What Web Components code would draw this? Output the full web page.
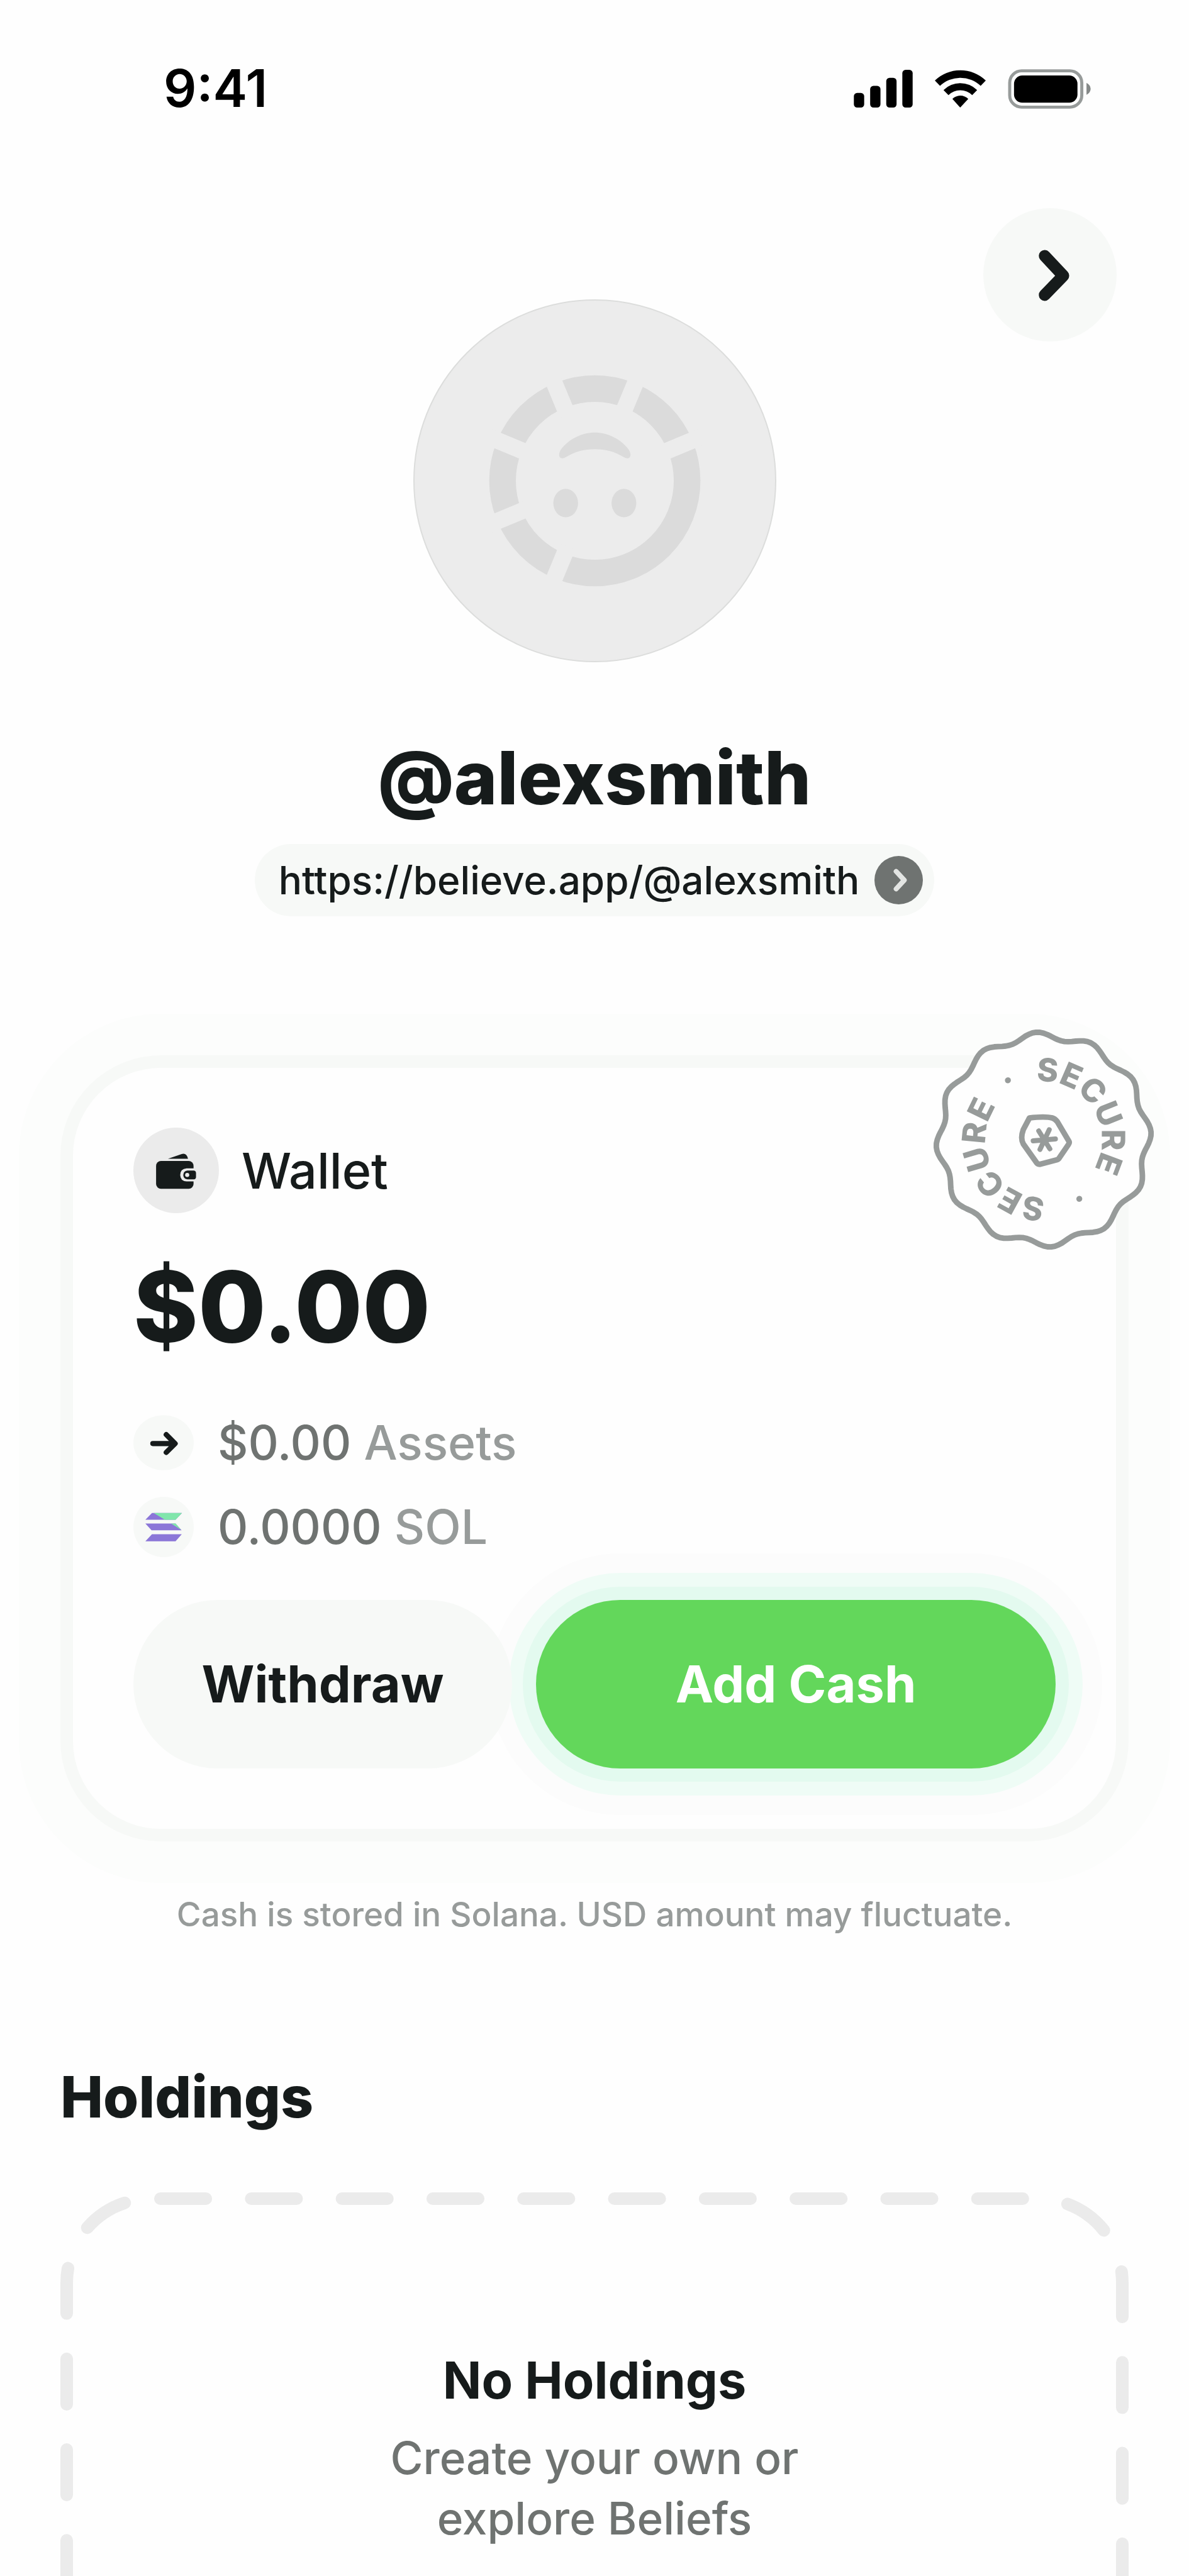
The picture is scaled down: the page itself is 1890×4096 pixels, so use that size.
<!DOCTYPE html>
<html lang="en">
<head>
<meta charset="utf-8">
<meta name="viewport" content="width=device-width, initial-scale=1">
<title>Profile</title>
<style>
    :root {
        --ink: #161b1b;
        --grey: #6f7371;
        --grey-light: #979b9a;
        --surface: #f7f9f7;
        --fill: #ebebeb;
        --page: #fefefe;
        --green: #63d75b;
        --gutter: 96px;
    }
    body {
        margin: 0;
        background: var(--page);
        color: var(--ink);
        font-family: Inter, "Liberation Sans", sans-serif;
    }
</style>
</head>
<body>
<profile-screen>
    <status-bar slot="status">9:41</status-bar>
    <profile-header handle="@alexsmith" url="https://believe.app/@alexsmith"></profile-header>
    <wallet-card amount="$0.00">
        <secure-badge slot="badge"></secure-badge>
        <balance-row icon="arrow" value="$0.00">Assets</balance-row>
        <balance-row icon="solana" value="0.0000">SOL</balance-row>
        <pill-button slot="actions">Withdraw</pill-button>
        <pill-button slot="actions" primary>Add Cash</pill-button>
    </wallet-card>
    <p slot="note">Cash is stored in Solana. USD amount may fluctuate.</p>
    <holdings-section slot="holdings" heading="Holdings">
        <h3 slot="title">No Holdings</h3>
        Create your own or<br>explore Beliefs
    </holdings-section>
</profile-screen>

<script>
const html = String.raw

class BaseElement extends HTMLElement {
    connectedCallback() {
        if (this.shadowRoot)
            return
        this.attachShadow({ mode: "open" })
        this.shadowRoot.innerHTML = this.render()
    }
}

class ProfileScreen extends BaseElement {
    render() {
        return html`
            <style>
                :host {
                    display: flex;
                    flex-direction: column;
                    height: 100vh;
                    overflow: hidden;
                }
                main {
                    display: flex;
                    flex-direction: column;
                    padding: 142px var(--gutter) 0;
                }
                ::slotted(p) {
                    margin: 84px 0 205px;
                    color: var(--grey-light);
                    font-size: 53px;
                    font-weight: 500;
                    line-height: 64px;
                    text-align: center;
                }
            </style>
            <slot name="status"></slot>
            <main>
                <slot></slot>
                <slot name="note"></slot>
                <slot name="holdings"></slot>
            </main>
        `
    }
}

class StatusBar extends BaseElement {
    render() {
        return html`
            <style>
                :host {
                    display: flex;
                    align-items: center;
                    justify-content: space-between;
                    padding: 93px 156px 0 260px;
                    color: #000;
                    font-size: 82px;
                    font-weight: 600;
                    line-height: 96px;
                }
                .icons {
                    display: flex;
                    align-items: center;
                    gap: 35px;
                }
                svg { display: block; }
            </style>
            <time><slot></slot></time>
            <div class="icons">
                <svg width="94" height="60" viewBox="52 276 285 183" aria-hidden="true">
                    <rect x="52" y="388" width="50" height="71" rx="16" />
                    <rect x="131" y="354" width="50" height="105" rx="16" />
                    <rect x="209" y="315" width="50" height="144" rx="16" />
                    <rect x="287" y="276" width="50" height="183" rx="16" />
                </svg>
                <svg width="81" height="60" viewBox="445 276 247 183" aria-hidden="true">
                    <path d="M445 328 A179 179 0 0 1 692 328 L667 354 A143 143 0 0 0 470 354 Z" />
                    <path d="M487 374 A116 116 0 0 1 650 374 L626 399 A82 82 0 0 0 511 399 Z" />
                    <path d="M530 417 A55 55 0 0 1 607 417 L568 459 Z" />
                </svg>
                <svg width="132" height="63" viewBox="800 270 402 193" aria-hidden="true">
                    <rect x="808" y="278" width="351" height="177" rx="58" fill="none" stroke="#979b9a" stroke-width="15" />
                    <rect x="829" y="301" width="309" height="132" rx="40" />
                    <path d="M1182 337 Q1202 348 1202 366 Q1202 384 1182 395 Z" fill="#858988" />
                </svg>
            </div>
        `
    }
}

class ProfileHeader extends BaseElement {
    render() {
        const handle = this.getAttribute("handle")
        const url = this.getAttribute("url")
        const gaps = [-157.5, -112.5, -67.5, -22.5, 112.5, 157.5]
            .map(angle => `<path d="M115 0 H185" transform="rotate(${angle})" />`)
            .join("")
        return html`
            <style>
                :host {
                    display: flex;
                    flex-direction: column;
                    align-items: center;
                }
                .top {
                    display: grid;
                    align-self: stretch;
                }
                .next, .avatar { grid-area: 1 / 1; }
                .next {
                    justify-self: end;
                    width: 212px;
                    height: 212px;
                    margin: 0 19px 0 0;
                    padding: 0;
                    border: 0;
                    border-radius: 50%;
                    background: var(--surface);
                }
                .avatar {
                    justify-self: center;
                    box-sizing: border-box;
                    width: 577px;
                    height: 577px;
                    margin-top: 145px;
                    border: 2px solid #dcdddc;
                    border-radius: 50%;
                    background: #ececec;
                }
                svg { display: block; }
                h1 {
                    margin: 114px 0 35px;
                    font-size: 117px;
                    font-weight: 800;
                    line-height: 140px;
                }
                a {
                    display: flex;
                    align-items: center;
                    gap: 24px;
                    height: 115px;
                    padding: 0 18px 0 38px;
                    border-radius: 58px;
                    background: var(--surface);
                    color: var(--ink);
                    font-size: 62px;
                    font-weight: 500;
                    text-decoration: none;
                }
            </style>
            <div class="top">
                <button class="next" type="button" aria-label="Next">
                    <svg viewBox="0 0 215 215" fill="none" stroke="#161b1b" stroke-width="19" stroke-linecap="round" stroke-linejoin="round">
                        <path d="M99 77 L129 109 L99 140" />
                    </svg>
                </button>
                <div class="avatar">
                    <svg viewBox="-291 -291 582 582" aria-hidden="true">
                        <circle r="149" fill="none" stroke="#dbdbdb" stroke-width="43" />
                        <g stroke="#ececec" stroke-width="27">${gaps}</g>
                        <g fill="#dbdbdb">
                            <path d="M-55 -50 C-42 -68 -20 -78 0 -78 C20 -78 42 -68 55 -50 C61 -40 56 -33 47 -38 C32 -47 18 -51 0 -51 C-18 -51 -32 -47 -47 -38 C-56 -33 -61 -40 -55 -50 Z" />
                            <ellipse cx="-47" cy="36" rx="20" ry="23" />
                            <ellipse cx="47" cy="36" rx="20" ry="23" />
                        </g>
                    </svg>
                </div>
            </div>
            <h1>${handle}</h1>
            <a href="${url}">
                <span>${url}</span>
                <svg width="77" height="77" viewBox="0 0 78 78" fill="none" aria-hidden="true">
                    <circle cx="39" cy="39" r="39" fill="#6f7371" />
                    <path d="M35 25 L48 39 L35 53" stroke="#e3e5e3" stroke-width="8" stroke-linecap="round" stroke-linejoin="round" />
                </svg>
            </a>
        `
    }
}

class WalletCard extends BaseElement {
    render() {
        return html`
            <style>
                :host {
                    display: flex;
                    flex-direction: column;
                    position: relative;
                    margin-top: 221px;
                    padding: 95px 96px 96px;
                    border: 20px solid var(--surface);
                    border-radius: 160px;
                    background: var(--page);
                    box-shadow: 0 0 0 66px #fcfdfc;
                }
                header {
                    display: flex;
                    align-items: center;
                    gap: 36px;
                }
                header svg { display: block; }
                h2 {
                    margin: 0;
                    font-size: 79px;
                    font-weight: 500;
                    line-height: 96px;
                }
                .amount {
                    margin: 57px 0 76px;
                    font-size: 156px;
                    font-weight: 800;
                    line-height: 184px;
                }
                .rows {
                    display: flex;
                    flex-direction: column;
                    gap: 38px;
                }
                .actions {
                    display: grid;
                    grid-template-columns: 602fr 826fr;
                    gap: 38px;
                    margin-top: 68px;
                }
                /* stamp hangs over the top right corner */
                ::slotted(secure-badge) {
                    position: absolute;
                    top: -61px;
                    right: -60px;
                }
            </style>
            <header>
                <svg width="136" height="136" viewBox="26 30 418 418" aria-hidden="true">
                    <circle cx="235" cy="239" r="209" fill="#ebebeb" />
                    <g fill="#161b1b">
                        <path d="M195 182 L262 159 Q286 152 293 182 Z" />
                        <rect x="137" y="193" width="183" height="136" rx="24" />
                        <path d="M330 229 H286 Q255 232 255 261 Q255 290 286 293 H330 Z" fill="#ebebeb" />
                        <path d="M290 240 H322 Q332 242 332 252 V271 Q332 281 322 283 H290 Q270 280 270 261 Q270 243 290 240 Z" />
                        <circle cx="289" cy="261" r="10" fill="#ebebeb" />
                    </g>
                </svg>
                <h2>Wallet</h2>
            </header>
            <div class="amount">${this.getAttribute("amount")}</div>
            <div class="rows"><slot></slot></div>
            <div class="actions"><slot name="actions"></slot></div>
            <slot name="badge"></slot>
        `
    }
}

class BalanceRow extends BaseElement {
    static icons = {
        arrow: `
            <svg viewBox="30 4 292 292" aria-hidden="true">
                <ellipse cx="176" cy="150" rx="146" ry="133" fill="#f7f9f7" />
                <path d="M124 154 H230 M189 111 L232 154 L189 197" fill="none" stroke="#161b1b" stroke-width="25" stroke-linecap="round" stroke-linejoin="round" />
            </svg>`,
        solana: `
            <svg viewBox="30 414 292 292" aria-hidden="true">
                <circle cx="176" cy="560" r="146" fill="#f7f9f7" />
                <g fill="#8b76d8">
                    <path d="M120 492 H265 L234 525 H88 Z" />
                    <path d="M88 543 H234 L263 576 H118 Z" />
                    <path d="M120 595 H264 L234 629 H88 Z" />
                </g>
                <path d="M128 492 H265 L234 525 H182 Z M212 543 H234 L260 573 Z" fill="#80e6ab" />
            </svg>`
    }

    render() {
        return html`
            <style>
                :host {
                    display: flex;
                    align-items: center;
                    gap: 38px;
                    font-size: 75px;
                    font-weight: 500;
                    line-height: 96px;
                }
                svg {
                    display: block;
                    width: 96px;
                    height: 96px;
                }
                .value { color: var(--grey); }
                .unit { color: var(--grey-light); }
            </style>
            ${BalanceRow.icons[this.getAttribute("icon")]}
            <div>
                <span class="value">${this.getAttribute("value")}</span>
                <span class="unit"><slot></slot></span>
            </div>
        `
    }
}

class PillButton extends BaseElement {
    render() {
        return html`
            <style>
                :host { display: block; }
                :host(:not([primary])) { position: relative; z-index: 1; }
                button {
                    display: block;
                    width: 100%;
                    height: 268px;
                    padding: 0;
                    border: 0;
                    border-radius: 134px;
                    background: var(--surface);
                    color: var(--ink);
                    font: 700 81px/96px Inter, "Liberation Sans", sans-serif;
                }
                :host([primary]) button {
                    background: var(--green);
                    box-shadow: 0 0 0 21px #e3faef, 0 0 0 43px #effcf6, 0 0 0 74px #fcfcfc;
                    color: #fff;
                }
            </style>
            <button type="button"><slot></slot></button>
        `
    }
}

class SecureBadge extends BaseElement {
    // wavy edge: twelve lobes round a circle
    get outline() {
        const points = []
        for (let deg = 0; deg < 360; deg += 2) {
            const angle = deg * Math.PI / 180
            const radius = 168 + 6 * Math.cos(12 * (deg + 94) * Math.PI / 180)
            points.push(`${(radius * Math.cos(angle)).toFixed(1)} ${(radius * Math.sin(angle)).toFixed(1)}`)
        }
        return `M${points.join("L")}Z`
    }

    render() {
        return html`
            <style>
                :host {
                    display: block;
                    width: 350px;
                    height: 350px;
                }
                svg { display: block; }
                text {
                    fill: var(--grey-light);
                    font-size: 52px;
                    font-weight: 800;
                    text-anchor: middle;
                }
            </style>
            <svg viewBox="-178 -178 356 356">
                <path d="${this.outline}" fill="#fefefe" stroke="#979b9a" stroke-width="9" stroke-linejoin="round" />
                <g transform="rotate(-130)">
                    <path id="ring" d="M94 0 A94 94 0 1 1 -94 0 A94 94 0 1 1 94 0" fill="none" />
                    <text><textPath href="#ring" startOffset="2.5%">·</textPath></text>
                    <text><textPath href="#ring" startOffset="26.8%">SECURE</textPath></text>
                    <text><textPath href="#ring" startOffset="52.5%">·</textPath></text>
                    <text><textPath href="#ring" startOffset="78.3%">SECURE</textPath></text>
                </g>
                <g fill="none" stroke="#979b9a" stroke-linecap="round" stroke-linejoin="round">
                    <path d="M-23 -35 Q2 -38 14 -35 Q18 -34 22 -29 L41 3 Q42 5 40 8 L25 30 Q24 32 20 33 L-6 40 Q-9 40 -11 38 L-33 7 Q-38 -2 -33 -16 Z" stroke-width="9" />
                    <path d="M-17 2 L19 -1 M-8 -14 L10 15 M9 -16 L-6 16" stroke-width="8" />
                </g>
            </svg>
        `
    }
}

class HoldingsSection extends BaseElement {
    render() {
        return html`
            <style>
                :host { display: block; }
                h2 {
                    margin: 0 0 99px;
                    font-size: 91px;
                    font-weight: 800;
                    line-height: 106px;
                }
                .empty {
                    display: grid;
                    color: var(--grey);
                    font-size: 71px;
                    font-weight: 500;
                    line-height: 96px;
                    text-align: center;
                }
                .frame, .text { grid-area: 1 / 1; }
                .frame {
                    width: 100%;
                    height: 100%;
                    min-height: 0;
                }
                .frame rect {
                    x: 10px;
                    y: 10px;
                    width: calc(100% - 20px);
                    height: calc(100% - 20px);
                    fill: none;
                    stroke: var(--fill);
                    stroke-width: 20px;
                    stroke-linecap: round;
                }
                .text { padding: 251px 0 337px; }
                ::slotted(h3) {
                    margin: 0 0 27px;
                    color: var(--ink);
                    font-size: 81px;
                    font-weight: 700;
                    line-height: 96px;
                }
            </style>
            <h2>${this.getAttribute("heading")}</h2>
            <div class="empty">
                <svg class="frame" aria-hidden="true"><rect rx="134" stroke-dasharray="72.15" stroke-dashoffset="-15" /></svg>
                <div class="text">
                    <slot name="title"></slot>
                    <slot></slot>
                </div>
            </div>
        `
    }
}

customElements.define("profile-screen", ProfileScreen)
customElements.define("status-bar", StatusBar)
customElements.define("profile-header", ProfileHeader)
customElements.define("wallet-card", WalletCard)
customElements.define("balance-row", BalanceRow)
customElements.define("pill-button", PillButton)
customElements.define("secure-badge", SecureBadge)
customElements.define("holdings-section", HoldingsSection)
</script>
</body>
</html>
